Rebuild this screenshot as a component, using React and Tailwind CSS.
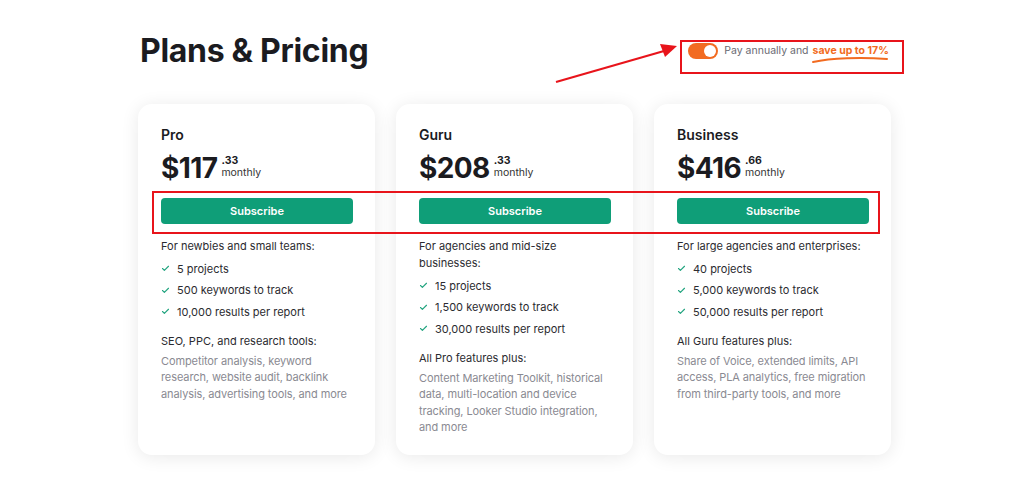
import { Check } from "lucide-react";

const plans = [
  {
    name: "Pro",
    price: "$117",
    cents: ".33",
    audience: "For newbies and small teams:",
    items: ["5 projects", "500 keywords to track", "10,000 results per report"],
    extraTitle: "SEO, PPC, and research tools:",
    extra:
      "Competitor analysis, keyword research, website audit, backlink analysis, advertising tools, and more",
  },
  {
    name: "Guru",
    price: "$208",
    cents: ".33",
    audience: "For agencies and mid-size businesses:",
    items: ["15 projects", "1,500 keywords to track", "30,000 results per report"],
    extraTitle: "All Pro features plus:",
    extra:
      "Content Marketing Toolkit, historical data, multi-location and device tracking, Looker Studio integration, and more",
  },
  {
    name: "Business",
    price: "$416",
    cents: ".66",
    audience: "For large agencies and enterprises:",
    items: ["40 projects", "5,000 keywords to track", "50,000 results per report"],
    extraTitle: "All Guru features plus:",
    extra:
      "Share of Voice, extended limits, API access, PLA analytics, free migration from third-party tools, and more",
  },
];

function PlanCard({ plan }) {
  return (
    <div className="w-[237px] rounded-[14px] bg-white pl-[23px] pr-[22px] pt-[21px] pb-[19px] shadow-[0_2px_18px_rgba(0,0,0,0.09)]">
      {/* Name */}
      <p className="text-[14px] font-semibold leading-[20px] text-[#1b1b1f]">{plan.name}</p>

      {/* Price */}
      <div className="mt-[7px] flex items-start">
        <span className="text-[28px] font-bold leading-[32px] tracking-[-0.6px] text-[#1b1b1f]">
          {plan.price}
        </span>
        <div className="ml-[4px] mt-[3px] flex flex-col">
          <span className="text-[10.5px] font-bold leading-[11px] text-[#1b1b1f]">{plan.cents}</span>
          <span className="text-[10.5px] leading-[13px] text-[#333]">monthly</span>
        </div>
      </div>

      {/* Subscribe */}
      <button className="mt-[14px] h-[26px] w-[192px] rounded-[4px] bg-[#0f9e78] text-[11px] font-semibold text-white">
        Subscribe
      </button>

      {/* Audience */}
      <p className="mt-[14px] text-[11px] leading-[17px] text-[#2b2b30]">{plan.audience}</p>

      {/* Feature list */}
      <ul className="mt-[3px] flex flex-col">
        {plan.items.map((item) => (
          <li key={item} className="flex h-[21.5px] items-center text-[11px] text-[#2b2b30]">
            <Check className="mr-[7px] h-[9px] w-[9px] text-[#21a47f]" strokeWidth={3} />
            {item}
          </li>
        ))}
      </ul>

      {/* Extras */}
      <p className="mt-[10px] text-[11px] leading-[17px] text-[#2b2b30]">{plan.extraTitle}</p>
      <p className="mt-[3px] text-[11px] leading-[16.5px] tracking-[-0.1px] text-[#8a8a92]">
        {plan.extra}
      </p>
    </div>
  );
}

export default function App() {
  return (
    <div
      className="relative h-[494px] w-[1024px] overflow-hidden bg-white"
      style={{ fontFamily: "Inter, 'Liberation Sans', sans-serif" }}
    >
      {/* Header */}
      <div className="flex items-start pl-[140px] pt-[31px]">
        <h1 className="text-[32px] font-bold leading-[40px] tracking-[-0.3px] text-[#1b1b1f]">
          Plans &amp; Pricing
        </h1>
        <div className="ml-[320px] mt-[12px] flex items-center">
          <div className="flex h-[16px] w-[30px] items-center justify-end rounded-full bg-[#f26b21] pr-[2px]">
            <div className="h-[12px] w-[12px] rounded-full bg-white" />
          </div>
          <span className="ml-[6px] text-[10.5px] text-[#6b6b73]">Pay annually and</span>
          <span className="relative ml-[4px] text-[10.5px] font-bold text-[#f26b21]">
            save up to 17%
            <svg
              className="absolute left-[-2px] top-[13px]"
              width="78"
              height="8"
              viewBox="0 0 78 8"
              fill="none"
            >
              <path
                d="M2 6 C 20 2, 50 1, 76 3"
                stroke="#f26b21"
                strokeWidth="2"
                strokeLinecap="round"
              />
            </svg>
          </span>
        </div>
      </div>

      {/* Cards */}
      <div className="mt-[33px] flex gap-[21px] pl-[138px]">
        {plans.map((p) => (
          <PlanCard key={p.name} plan={p} />
        ))}
      </div>

      {/* Annotations */}
      <div className="pointer-events-none absolute left-[680px] top-[40px] h-[34px] w-[224px] border-[2px] border-[#e8141b]" />
      <div className="pointer-events-none absolute left-[152px] top-[191px] h-[43px] w-[728px] border-[2px] border-[#e8141b]" />
      <svg
        className="pointer-events-none absolute left-0 top-0"
        width="1024"
        height="494"
        viewBox="0 0 1024 494"
      >
        <line x1="556" y1="82" x2="664" y2="51" stroke="#e8141b" strokeWidth="2.2" />
        <polygon points="677,46 660,44 665,57" fill="#e8141b" />
      </svg>
    </div>
  );
}
